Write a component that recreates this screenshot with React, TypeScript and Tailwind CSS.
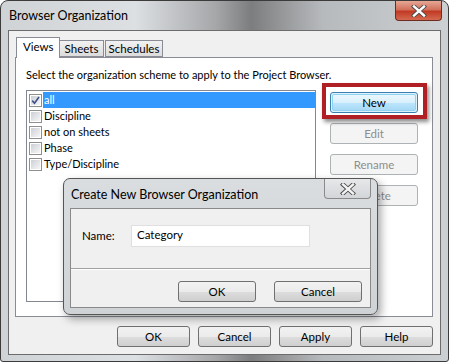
import React from "react";

const font = "font-['Lato','Segoe_UI','Noto_Sans',sans-serif]";

function Btn({
  label,
  w = "w-[72px]",
  disabled = false,
  focused = false,
}: {
  label: string;
  w?: string;
  disabled?: boolean;
  focused?: boolean;
}) {
  if (disabled) {
    return (
      <div
        className={`${w} h-[21px] rounded-[3px] border border-[#adb2b5] bg-[#f4f4f4] flex items-center justify-center text-[11.5px] text-[#8d8d8d]`}
      >
        {label}
      </div>
    );
  }
  if (focused) {
    return (
      <div
        className={`${w} h-[21px] rounded-[3px] border border-[#3c7fb1] p-[1px] bg-[#dff1fb]`}
      >
        <div className="h-full rounded-[2px] border border-[#8fd3f3] bg-[linear-gradient(180deg,#eaf6fd_0%,#d9f0fc_50%,#bee6fd_51%,#a7d9f5_100%)] flex items-center justify-center text-[11.5px] text-black leading-none">
          {label}
        </div>
      </div>
    );
  }
  return (
    <div
      className={`${w} h-[21px] rounded-[3px] border border-[#707070] bg-[linear-gradient(180deg,#f2f2f2_0%,#ebebeb_50%,#dddddd_51%,#cfcfcf_100%)] flex items-center justify-center text-[11.5px] text-black`}
    >
      {label}
    </div>
  );
}

function Check({ checked = false }: { checked?: boolean }) {
  return (
    <div className="w-[13px] h-[13px] border border-[#8e8f8f] bg-white p-[1px] shrink-0">
      <div className="w-full h-full bg-[linear-gradient(135deg,#cbcfd5_0%,#f6f6f6_100%)] relative">
        {checked && (
          <svg viewBox="0 0 9 9" className="absolute inset-0 w-full h-full">
            <path
              d="M1.2 4.6 L3.5 7.2 L8 1"
              fill="none"
              stroke="#3c4f8a"
              strokeWidth="1.6"
            />
          </svg>
        )}
      </div>
    </div>
  );
}

function XGlyph({ color = "white" }: { color?: string }) {
  return (
    <svg width="16" height="12" viewBox="0 0 16 12">
      <path
        d="M3 1.5 L13 10.5 M13 1.5 L3 10.5"
        stroke="#4a4a4a"
        strokeWidth="4.2"
        strokeLinecap="square"
      />
      <path
        d="M3 1.5 L13 10.5 M13 1.5 L3 10.5"
        stroke={color}
        strokeWidth="2.4"
        strokeLinecap="square"
      />
    </svg>
  );
}

export default function App() {
  const items = ["all", "Discipline", "not on sheets", "Phase", "Type/Discipline"];
  return (
    <div className={`w-[449px] h-[362px] relative overflow-hidden ${font} bg-white`}>
      {/* main window frame */}
      <div className="w-full h-full rounded-t-[8px] rounded-b-[3px] border border-[#3b3b3b] bg-[linear-gradient(90deg,#cfd3d6_0%,#dde0e3_30%,#a5a7a9_48%,#7c7d7e_56%,#b7babd_72%,#ccd0d3_100%)] flex flex-col px-[7px] pb-[6px]">
        {/* title bar */}
        <div className="h-[29px] flex items-start justify-between">
          <div className="pt-[6px] pl-[1px] text-[12.5px] text-black leading-[18px]">
            Browser Organization
          </div>
          <div className="w-[47px] h-[20px] mr-[-1px] rounded-b-[4px] border border-t-0 border-[#6d2b22] bg-[linear-gradient(180deg,#e6a795_0%,#d2725d_45%,#c23a24_55%,#d46a50_100%)] flex items-center justify-center">
            <XGlyph />
          </div>
        </div>
        {/* client area */}
        <div className="flex-1 border border-[#6c6c6c] bg-[#f0f0f0] flex flex-col pl-[6px] pr-[7px] pt-[6px]">
          {/* tabs */}
          <div className="flex items-end h-[20px] pl-[1px]">
            <div className="w-[44px] h-[21px] mb-[-1px] z-10 border border-b-0 border-[#898c95] bg-white text-[11.5px] pl-[6px] pt-[1px] leading-[16px]">
              Views
            </div>
            <div className="w-[44px] h-[17px] border border-l-0 border-[#898c95] bg-[linear-gradient(180deg,#f2f2f2_0%,#dcdcdc_100%)] text-[11.5px] flex items-center justify-center leading-none">
              Sheets
            </div>
            <div className="w-[58px] h-[17px] ml-[1px] border border-[#898c95] bg-[linear-gradient(180deg,#f2f2f2_0%,#dcdcdc_100%)] text-[11.5px] flex items-center justify-center leading-none">
              Schedules
            </div>
          </div>
          {/* tab panel */}
          <div className="h-[260px] border border-[#898c95] bg-white flex flex-col pl-[10px] pt-[9px]">
            <div className="text-[11px] leading-[16px] text-black">
              Select the organization scheme to apply to the Project Browser.
            </div>
            <div className="flex mt-[7px]">
              <div className="w-[290px] h-[212px] border border-[#828790] bg-white pt-[1px] pl-[2px]">
                {items.map((it, i) => (
                  <div key={it} className="h-[16px] flex items-center gap-[1px]">
                    <Check checked={i === 0} />
                    <div
                      className={`h-[16px] flex items-center text-[11px] pl-[1px] ${
                        i === 0 ? "flex-1 bg-[#3399ff] text-white" : "text-black"
                      }`}
                    >
                      {it}
                    </div>
                  </div>
                ))}
              </div>
              <div className="ml-[14px] pt-[2px] flex flex-col gap-[10px] relative">
                <div className="absolute left-[-8px] top-[-7px] w-[105px] h-[36px] border-[4px] border-[#b01f24] shadow-[2px_3px_4px_rgba(0,0,0,0.45)]" />
                <Btn label="New" w="w-[88px]" focused />
                <Btn label="Edit" w="w-[88px]" disabled />
                <Btn label="Rename" w="w-[88px]" disabled />
                <Btn label="Delete" w="w-[88px]" disabled />
              </div>
            </div>
          </div>
          {/* bottom buttons */}
          <div className="flex justify-end gap-[8px] mt-[9px]">
            <Btn label="OK" w="w-[73px]" />
            <Btn label="Cancel" w="w-[73px]" />
            <Btn label="Apply" w="w-[73px]" />
            <Btn label="Help" w="w-[73px]" />
          </div>
        </div>
      </div>

      {/* Create New Browser Organization dialog */}
      <div className="absolute left-[63px] top-[178px] w-[315px] h-[137px] rounded-[7px] border border-[#555] bg-[linear-gradient(180deg,#d9dde0_0%,#cfd3d6_100%)] shadow-[3px_4px_8px_rgba(0,0,0,0.35)] flex flex-col px-[6px] pb-[6px]">
        <div className="h-[29px] flex items-start justify-between">
          <div className="pt-[7px] pl-[1px] text-[12.5px] text-black leading-[18px]">
            Create New Browser Organization
          </div>
          <div className="w-[47px] h-[20px] mr-[0px] rounded-b-[4px] border border-t-0 border-[#8a8a8a] bg-[linear-gradient(180deg,#e6e8ea_0%,#d3d6d9_100%)] flex items-center justify-center">
            <XGlyph color="#f4f4f4" />
          </div>
        </div>
        <div className="flex-1 border border-[#8a8a8a] bg-[#f0f0f0] flex flex-col">
          <div className="flex items-center h-[22px] mt-[16px] pl-[11px]">
            <div className="w-[49px] text-[11.5px] text-black">Name:</div>
            <div className="w-[179px] h-[22px] border border-[#e0e0e0] bg-white text-[11.5px] flex items-center pl-[5px] pb-[2px]">
              Category
            </div>
          </div>
          <div className="mt-[21px] h-[1px] bg-[#a0a0a0] border-b border-white box-content" />
          <div className="flex justify-end gap-[18px] pr-[8px] mt-[11px]">
            <Btn label="OK" w="w-[78px]" />
            <Btn label="Cancel" w="w-[88px]" />
          </div>
        </div>
      </div>
    </div>
  );
}
